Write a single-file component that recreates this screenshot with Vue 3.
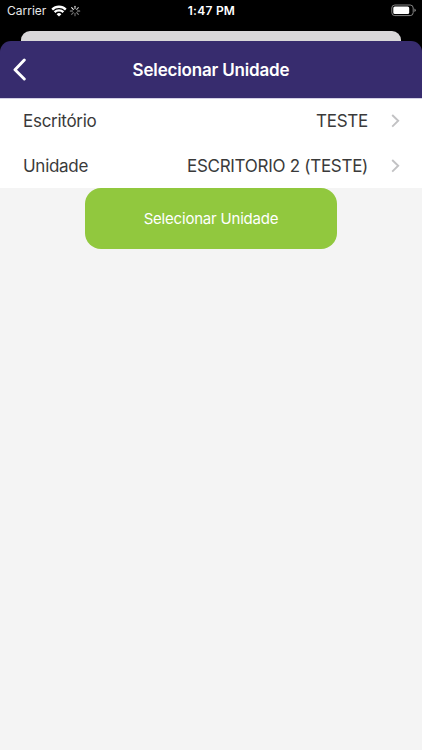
<template>
  <div class="screen">
    <div class="status-bar">
      <div class="status-left">
        <span class="carrier">Carrier</span>
        <svg class="wifi" viewBox="0 0 16 12">
          <path d="M1.2 4.6 A9.7 9.7 0 0 1 14.8 4.6" />
          <path d="M3.6 7.2 A6.3 6.3 0 0 1 12.4 7.2" />
          <path class="wifi-dot" d="M8 11.6 L5.6 9.2 A3.4 3.4 0 0 1 10.4 9.2 Z" />
        </svg>
        <svg class="spinner" viewBox="-6 -6 12 12">
          <line
            v-for="(opacity, i) in spokes"
            :key="i"
            x1="0"
            y1="-2.4"
            x2="0"
            y2="-4.7"
            :opacity="opacity"
            :transform="`rotate(${i * 45})`"
          />
        </svg>
      </div>
      <span class="time">1:47 PM</span>
      <svg class="battery" viewBox="0 0 26 13">
        <rect class="battery-shell" x="0.8" y="1" width="21.4" height="10.6" rx="3" />
        <rect class="battery-level" x="2.3" y="2.5" width="15.9" height="7.6" rx="1.6" />
        <path class="battery-cap" d="M23.4 4.6 Q24.8 5.2 24.8 6.3 Q24.8 7.4 23.4 8 Z" />
      </svg>
    </div>

    <!-- Borda da tela anterior, atrás do modal -->
    <div class="back-card"></div>

    <div class="modal">
      <header class="header">
        <button class="back" aria-label="Voltar">
          <svg viewBox="0 0 14 24">
            <path d="M11.3 2 L2 11.8 L11.3 21" />
          </svg>
        </button>
        <h1 class="title">Selecionar Unidade</h1>
      </header>

      <div class="list">
        <div v-for="row in rows" :key="row.label" class="row">
          <span class="label">{{ row.label }}</span>
          <span class="value">{{ row.value }}</span>
          <svg class="chevron" viewBox="0 0 9 14">
            <path d="M1.2 1 L7.2 6.8 L1.2 12.6" />
          </svg>
        </div>
      </div>

      <button class="submit">Selecionar Unidade</button>
    </div>
  </div>
</template>

<script setup>
const rows = [
  { label: 'Escritório', value: 'TESTE' },
  { label: 'Unidade', value: 'ESCRITORIO 2 (TESTE)' }
]

// Opacidade de cada traço do indicador de atividade
const spokes = [0.85, 0.75, 0.65, 0.5, 0.45, 0.45, 0.6, 0.95]
</script>

<style>
body {
  background: #000;
}
</style>

<style scoped>
.screen {
  height: 750px;
  display: flex;
  flex-direction: column;
  overflow: hidden;
  background: #000;
  font-family: Inter, "Liberation Sans", sans-serif;
}

.status-bar {
  height: 31px;
  flex: none;
  display: grid;
  grid-template-columns: 1fr auto 1fr;
  align-items: start;
  padding: 0 6px 0 7px;
  box-sizing: border-box;
  color: #fff;
}

.status-left {
  display: flex;
  align-items: flex-start;
}

.carrier {
  width: 39px;
  font-size: 12px;
  line-height: 22px;
  color: #e8e8e8;
}

.wifi {
  width: 16px;
  height: 12px;
  margin: 5px 0 0 5px;
  fill: none;
  stroke: #fff;
  stroke-width: 2.4;
}

.wifi .wifi-dot {
  fill: #fff;
  stroke: none;
}

.spinner {
  width: 12px;
  height: 12px;
  margin: 5px 0 0 2px;
  stroke: #fff;
  stroke-width: 1.1;
  stroke-linecap: round;
}

.time {
  font-size: 12px;
  font-weight: 600;
  line-height: 22px;
  letter-spacing: 0.25px;
}

.battery {
  justify-self: end;
  width: 26px;
  height: 13px;
  margin: 4px -1px 0 0;
}

.battery-shell {
  fill: none;
  stroke: #858585;
  stroke-width: 1;
}

.battery-level {
  fill: #fff;
}

.battery-cap {
  fill: #858585;
}

.back-card {
  height: 10px;
  flex: none;
  margin: 0 21px;
  border-radius: 9px 9px 0 0;
  background: #d9d7d9;
}

/* O roxo também fica no fundo para não clarear os cantos arredondados */
.modal {
  flex: 1;
  display: flex;
  flex-direction: column;
  align-items: center;
  border-radius: 11px 11px 0 0;
  background: linear-gradient(#372c6e 57px, #f4f4f4 57px);
}

.header {
  width: 100%;
  height: 57px;
  flex: none;
  display: grid;
  grid-template-columns: 1fr auto 1fr;
  align-items: center;
}

.back {
  width: 14px;
  height: 24px;
  margin-left: 13px;
  padding: 0;
  border: 0;
  background: none;
}

.back svg {
  display: block;
  width: 14px;
  height: 24px;
  fill: none;
  stroke: #fff;
  stroke-width: 2.9;
  stroke-linecap: round;
  stroke-linejoin: round;
}

.title {
  margin: 0;
  font-size: 17px;
  font-weight: 600;
  line-height: 24px;
  letter-spacing: -0.17px;
  color: #fff;
}

.list {
  width: 100%;
  height: 90px;
  flex: none;
  box-sizing: border-box;
  border-top: 1px solid #d3cfe5;
  background: #fff;
}

.row {
  height: 45px;
  display: flex;
  align-items: center;
  box-sizing: border-box;
  padding: 0 22px 1px 23px;
  font-size: 17px;
  letter-spacing: -0.28px;
  color: #3a3a3a;
}

.label {
  flex: 1;
}

.value {
  margin-right: 23px;
}

.chevron {
  width: 9px;
  height: 14px;
  fill: none;
  stroke: #c2c2c4;
  stroke-width: 1.9;
}

.submit {
  width: 252px;
  height: 61px;
  padding: 0;
  border: 0;
  border-radius: 16px;
  background: #91c83e;
  color: #fff;
  font-family: inherit;
  font-size: 15px;
  letter-spacing: -0.2px;
}
</style>
